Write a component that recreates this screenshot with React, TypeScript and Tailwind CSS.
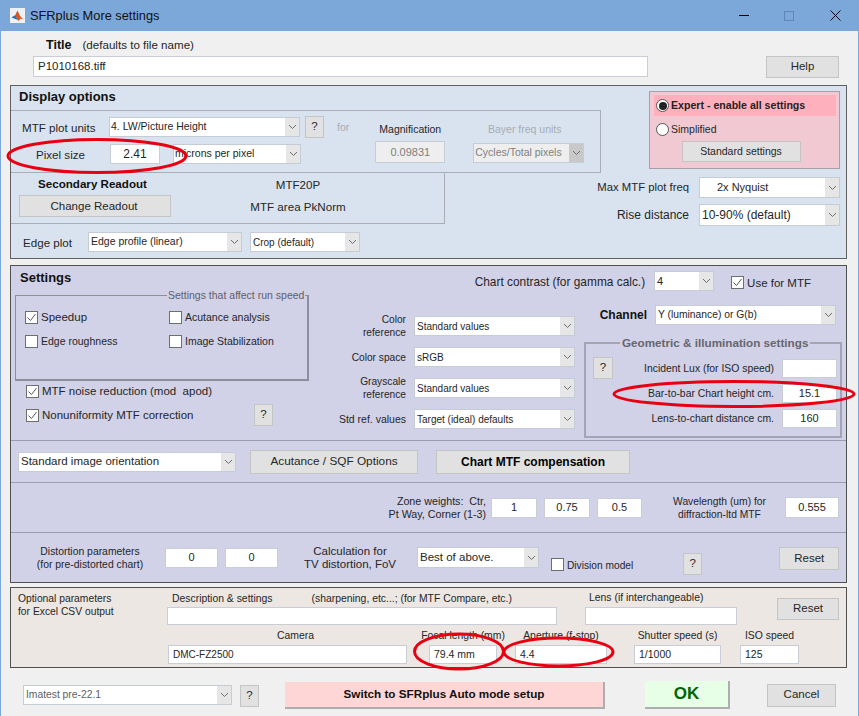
// SFRplus More settings dialog
import React from "react";

const ink = "leading-[13px] text-[#262626] whitespace-nowrap";

function Select({ className = "", text, muted = false, fs = "text-[10.5px]", pad = "pl-[2px]", tone = "text-[#262626]" }: { className?: string; text: string; muted?: boolean; fs?: string; pad?: string; tone?: string }) {
  return (
    <div className={`flex shrink-0 items-stretch border border-[#c6ccd6] ${muted ? "bg-[#eeeeee]" : "bg-white"} ${className}`}>
      <div className={`flex-1 overflow-hidden flex items-center whitespace-nowrap ${fs} ${pad} ${muted ? "text-[#808080]" : tone}`}>{text}</div>
      <div className={`w-[14px] flex items-center justify-center ${muted ? "bg-[#c8c8c8]" : "bg-[#e6e6e6]"}`}>
        <svg width="9" height="6" viewBox="0 0 9 6" fill="none" stroke="#6e6e6e" strokeWidth="1"><path d="M1 1l3.5 3.5L8 1" /></svg>
      </div>
    </div>
  );
}

function Input({ className = "", text = "", center = false, muted = false, fs = "text-[11px]" }: { className?: string; text?: string; center?: boolean; muted?: boolean; fs?: string }) {
  return (
    <div className={`flex shrink-0 items-center border border-[#c9cdd6] whitespace-nowrap ${fs} ${center ? "justify-center" : "pl-[4px]"} ${muted ? "bg-[#eeeeee] text-[#808080]" : "bg-white text-[#262626]"} ${className}`}>{text}</div>
  );
}

function Btn({ className = "", text, bold = false, fs = "text-[11.5px]" }: { className?: string; text: string; bold?: boolean; fs?: string }) {
  return (
    <div className={`flex shrink-0 items-center justify-center border border-[#c4c4c4] bg-[#e1e1e1] whitespace-nowrap ${fs} ${bold ? "font-bold text-black" : "text-[#262626]"} ${className}`}>{text}</div>
  );
}

function Help({ className = "" }: { className?: string }) {
  return <Btn text="?" className={`w-[19px] h-[22px] ${className}`} />;
}

function Check({ label, on = false, className = "", fs = "text-[11.5px]" }: { label: string; on?: boolean; className?: string; fs?: string }) {
  return (
    <div className={`flex items-center shrink-0 ${className}`}>
      <div className="w-[13px] h-[13px] shrink-0 border border-[#6e6e6e] bg-white flex items-center justify-center">
        {on && (
          <svg width="11" height="11" viewBox="0 0 11 11" fill="none" stroke="#5a5a5a" strokeWidth="1"><path d="M1.5 5.5l3 3 5-6.5" /></svg>
        )}
      </div>
      <span className={`${ink} ${fs} whitespace-pre ml-[3px] mt-[1px]`}>{label}</span>
    </div>
  );
}

function Radio({ on = false }: { on?: boolean }) {
  return (
    <div className="w-[13px] h-[13px] shrink-0 rounded-full border border-[#555555] bg-white flex items-center justify-center">
      {on && <div className="w-[8px] h-[8px] rounded-full bg-[#222222]" />}
    </div>
  );
}

function SettingRow({ label, value, className = "", fs = "text-[10.5px]" }: { label: React.ReactNode; value: string; className?: string; fs?: string }) {
  return (
    <div className={`flex items-center h-[20px] ${className}`}>
      <div className={`${ink} ${fs} w-[94px] text-right`}>{label}</div>
      <Select className="w-[161px] h-[20px] ml-[8px]" text={value} fs="text-[10px]" pad="pl-[2px]" />
    </div>
  );
}

function GeoRow({ label, value, fs = "text-[10.4px]" }: { label: string; value?: string; fs?: string }) {
  return (
    <div className="flex items-center justify-end">
      <span className={`${ink} ${fs}`}>{label}</span>
      <Input className="w-[55px] h-[19px] ml-[8px]" text={value} center />
    </div>
  );
}

function Labelled({ label, value, className = "", pad = "", fs = "text-[10.4px]", ifs = "text-[10.5px]" }: { label: string; value?: string; className?: string; pad?: string; fs?: string; ifs?: string }) {
  return (
    <div className={`flex flex-col shrink-0 ${className}`}>
      <div className={`${ink} ${fs} ${pad} flex justify-center h-[14px] mb-[2px]`}>{label}</div>
      <Input className="w-full h-[19px]" text={value} fs={ifs} />
    </div>
  );
}

function Overlay() {
  return (
    <svg className="absolute left-0 top-0" width="859" height="716" fill="none" stroke="#e80012" strokeWidth="3">
      <ellipse cx="96" cy="156" rx="89" ry="16.5" />
      <ellipse cx="733" cy="394" rx="120" ry="12.5" />
      <ellipse cx="458" cy="651.5" rx="44.5" ry="17.5" />
      <ellipse cx="557.5" cy="652" rx="54.5" ry="14" />
    </svg>
  );
}

export default function App() {
  return (
    <div className="relative w-[859px] h-[716px] overflow-hidden bg-[#f0f0f0] font-['Liberation_Sans',Arial,sans-serif] border-x border-[#7ca8d9]">
      {/* title bar */}
      <div className="h-[31px] -mx-px bg-[#7ca8d9] flex items-center">
        <svg className="ml-[10px]" width="15" height="15" viewBox="0 0 15 15">
          <rect width="15" height="15" fill="#eef1f4" />
          <path d="M1.5 9.5L5 7.5l2.5-5L10 8l3.5 3.5-3-1-2 2.5L6 9z" fill="#d9531e" />
          <path d="M1.5 9.5L5 7.5l1.5 2 1.5 2.5z" fill="#2a6fb0" />
        </svg>
        <span className="ml-[5px] text-[12.8px] text-[#111111]">SFRplus More settings</span>
        <div className="ml-auto flex items-center">
          <div className="w-[10px] h-px bg-black" />
          <div className="w-[10px] h-[10px] border border-[#5f87b5] ml-[35px]" />
          <svg className="ml-[36px] mr-[18px]" width="11" height="11" viewBox="0 0 11 11" stroke="#000" strokeWidth="1"><path d="M.5.5l10 10M10.5.5l-10 10" /></svg>
        </div>
      </div>

      {/* title */}
      <div className="flex items-baseline mt-[7px] h-[14px] pl-[45px]">
        <span className="text-[12.5px] font-bold text-[#111111] leading-[14px]">Title</span>
        <span className={`${ink} text-[11.6px] ml-[11px]`}>(defaults to file name)</span>
      </div>
      <div className="flex mt-[4px] pl-[32px]">
        <Input className="w-[615px] h-[21px]" text="P1010168.tiff" fs="text-[11.5px] pl-[1px]" />
        <Btn className="w-[73px] h-[22px] ml-[118px]" text="Help" />
      </div>

      {/* display options */}
      <div className="flex ml-[9px] mt-[7px] w-[837px] h-[174px] border border-[#606060] bg-[#d9e3ef]">
        <div className="w-[590px] shrink-0">
          <div className="h-[24px] pl-[8px] pt-[4px] text-[13px] leading-[14px] font-bold text-[#111111]">Display options</div>
          <div className="flex h-[63px] border-y border-r border-[#a9aeb6]">
            <div className="w-[313px] shrink-0">
              <div className="flex items-center mt-[5px] h-[22px]">
                <span className={`${ink} text-[11.6px] ml-[11px] w-[88px] mt-[1px]`}>MTF plot units</span>
                <Select className="w-[191px] h-[20px]" text="4. LW/Picture Height" pad="pl-[1px]" />
                <Help className="ml-[5px]" />
              </div>
              <div className="flex items-center mt-[6px] h-[20px]">
                <span className={`${ink} text-[11.6px] ml-[25px] w-[74px] mt-[1px]`}>Pixel size</span>
                <Input className="w-[50px] h-[20px]" text="2.41" center fs="text-[12px]" />
                <Select className="w-[128px] h-[20px] ml-[13px]" text="microns per pixel" pad="pl-[1px]" />
              </div>
            </div>
            <div className="text-[10.5px] leading-[13px] text-[#a6acb5] ml-[13px] mt-[10px]">for</div>
            <div className="w-[70px] ml-[26px] flex flex-col items-center">
              <div className={`${ink} text-[10.5px] mt-[12px]`}>Magnification</div>
              <Input className="w-[70px] h-[22px] mt-[5px]" text="0.09831" center muted />
            </div>
            <div className="w-[111px] ml-[28px] flex flex-col items-center">
              <div className="text-[10.5px] leading-[13px] whitespace-nowrap text-[#a6acb5] mt-[12px] pr-[8px]">Bayer freq units</div>
              <Select className="w-[111px] h-[20px] mt-[7px]" text="Cycles/Total pixels" muted pad="pl-[1px]" />
            </div>
          </div>
          <div className="flex w-[434px] h-[51px] border-b border-r border-[#a9aeb6]">
            <div className="w-[160px] pl-[8px] shrink-0">
              <div className="text-[11.6px] leading-[13px] font-bold text-[#111111] text-center mt-[4px] pr-[5px]">Secondary Readout</div>
              <Btn className="w-[152px] h-[22px] mt-[5px] pt-[1px] pr-[2px]" text="Change Readout" />
            </div>
            <div className={`${ink} text-[11.6px] w-[254px] text-center`}>
              <div className="mt-[5px]">MTF20P</div>
              <div className="mt-[9px]">MTF area PkNorm</div>
            </div>
          </div>
          <div className="flex items-center mt-[8px]">
            <span className={`${ink} text-[11.6px] ml-[12px] w-[65px]`}>Edge plot</span>
            <Select className="w-[154px] h-[20px]" text="Edge profile (linear)" />
            <Select className="w-[110px] h-[20px] ml-[8px]" text="Crop (default)" fs="text-[10px]" />
          </div>
        </div>
        <div className="ml-[48px] mt-[5px] w-[191px]">
          <div className="h-[78px] border border-[#a8a0a8] bg-[#f0c9d3] pl-[4px] pr-[3px] pt-[3px]">
            <div className="h-[21px] bg-[#ffb0bc] flex items-center pl-[2px]">
              <Radio on />
              <span className="text-[10.6px] leading-[13px] font-bold text-[#222222] whitespace-nowrap ml-[2px]">Expert - enable all settings</span>
            </div>
            <div className="flex items-center pl-[2px] mt-[3px] h-[20px]">
              <Radio />
              <span className={`${ink} text-[10.5px] ml-[2px]`}>Simplified</span>
            </div>
            <div className="flex justify-center pr-[8px] mt-[2px]">
              <Btn className="w-[119px] h-[21px]" text="Standard settings" fs="text-[10.5px]" />
            </div>
          </div>
          <div className="flex items-center justify-end mt-[8px]">
            <span className={`${ink} text-[11.3px]`}>Max MTF plot freq</span>
            <Select className="w-[141px] h-[21px] ml-[10px]" text="2x Nyquist" fs="text-[11px]" pad="pl-[17px]" />
          </div>
          <div className="flex items-center justify-end mt-[6px]">
            <span className={`${ink} text-[12px]`}>Rise distance</span>
            <Select className="w-[141px] h-[22px] ml-[10px]" text="10-90% (default)" fs="text-[12px]" />
          </div>
        </div>
      </div>

      {/* settings */}
      <div className="ml-[9px] mt-[6px] w-[837px] h-[318px] border border-[#505050] bg-[#d1d1e8]">
        <div className="h-[175px] border-b border-[#9c9cb2]">
          <div className="flex h-[29px]">
            <div className="ml-[9px] mt-[5px] text-[13px] leading-[14px] font-bold text-[#111111]">Settings</div>
            <div className="flex items-center ml-auto h-[20px] mt-[5px] pr-[35px]">
              <span className={`${ink} text-[11.9px] mt-[3px]`}>Chart contrast (for gamma calc.)</span>
              <Select className="w-[60px] h-[20px] ml-[9px]" text="4" fs="text-[11px]" />
              <Check className="ml-[17px] mt-[3px]" label="Use for MTF" on />
            </div>
          </div>
          <div className="flex">
            <div className="w-[301px] shrink-0">
              <div className="relative ml-[4px] w-[294px] h-[86px] border border-r-2 border-b-2 border-[#8e8e9c] pt-[14px] pl-[9px]">
                <div className="absolute left-[151px] -top-[7px] bg-[#d1d1e8] px-[1px] text-[10.5px] leading-[13px] whitespace-nowrap text-[#606068]">Settings that affect run speed</div>
                <div className="grid grid-cols-[144px_1fr] gap-y-[10px]">
                  <Check label="Speedup" on />
                  <Check label="Acutance analysis" fs="text-[10.5px]" />
                  <Check label="Edge roughness" fs="text-[10.5px]" />
                  <Check label="Image Stabilization" fs="text-[10.5px]" />
                </div>
              </div>
              <Check className="ml-[15px] mt-[3px]" label="MTF noise reduction (mod  apod)" on />
              <div className="flex items-center mt-[6px]">
                <Check className="ml-[15px]" label="Nonuniformity MTF correction" on />
                <Help className="ml-auto mr-[39px]" />
              </div>
            </div>
            <div className="shrink-0 pt-[21px] flex flex-col gap-[11px]">
              <SettingRow label={<>Color<br />reference</>} value="Standard values" fs="text-[10.2px]" />
              <SettingRow label="Color space" value="sRGB" fs="text-[10.2px]" />
              <SettingRow label={<>Grayscale<br />reference</>} value="Standard values" fs="text-[10.2px]" />
              <SettingRow label="Std ref. values" value="Target (ideal) defaults" />
            </div>
            <div className="ml-[9px] w-[258px] shrink-0 pt-[10px]">
              <div className="flex items-center justify-end pr-[6px]">
                <span className="text-[12px] leading-[14px] font-bold text-[#111111]">Channel</span>
                <Select className="w-[181px] h-[20px] ml-[8px]" text="Y (luminance) or G(b)" fs="text-[10.3px]" />
              </div>
              <div className="relative mt-[17px] h-[96px] border-2 border-[#a4a4b4] flex">
                <div className="absolute left-[34px] -top-[8px] bg-[#d1d1e8] px-[2px] text-[11.7px] leading-[14px] font-bold whitespace-nowrap text-[#66666e]">Geometric &amp; illumination settings</div>
                <Help className="ml-[7px] mt-[13px] w-[20px]" />
                <div className="flex-1 pr-[3px] pt-[15px] flex flex-col gap-[6px]">
                  <GeoRow label="Incident Lux (for ISO speed)" />
                  <GeoRow label="Bar-to-bar Chart height cm." value="15.1" />
                  <GeoRow label="Lens-to-chart distance cm." value="160" />
                </div>
              </div>
            </div>
          </div>
        </div>

        <div className="h-[42px] border-b border-[#9c9cb2] flex items-center">
          <Select className="w-[218px] h-[20px] ml-[7px]" text="Standard image orientation" fs="text-[11.5px]" />
          <Btn className="w-[168px] h-[24px] ml-[14px]" text="Acutance / SQF Options" fs="text-[11.8px]" />
          <Btn className="w-[194px] h-[24px] ml-[18px]" text="Chart MTF compensation" bold fs="text-[12px]" />
        </div>

        <div className="h-[50px] border-b border-[#9c9cb2] flex items-center">
          <div className={`${ink} text-[10.7px] w-[475px] text-right whitespace-pre`}>{"Zone weights:  Ctr,\nPt Way, Corner (1-3)"}</div>
          <Input className="w-[46px] h-[20px] ml-[5px]" text="1" center />
          <Input className="w-[46px] h-[20px] ml-[7px]" text="0.75" center />
          <Input className="w-[45px] h-[20px] ml-[7px]" text="0.5" center />
          <div className={`${ink} text-[10.3px] w-[93px] ml-[31px] text-center`}>Wavelength (um) for<br />diffraction-ltd MTF</div>
          <Input className="w-[54px] h-[21px] ml-[19px]" text="0.555" center />
        </div>

        <div className="h-[49px] flex items-center">
          <div className={`${ink} text-[10.4px] w-[158px] shrink-0 text-center`}>Distortion parameters<br />(for pre-distorted chart)</div>
          <Input className="w-[53px] h-[20px] ml-[-4px]" text="0" center />
          <Input className="w-[53px] h-[20px] ml-[7px]" text="0" center />
          <div className={`${ink} text-[11.5px] w-[92px] shrink-0 ml-[26px] text-center`}>Calculation for<br />TV distortion, FoV</div>
          <Select className="w-[122px] h-[21px] ml-[21px]" text="Best of above." fs="text-[11.5px]" />
          <Check className="ml-[12px] mt-[14px]" label="Division model" fs="text-[10.2px]" />
          <Help className="ml-[50px] mt-[13px]" />
          <Btn className="w-[60px] h-[23px] ml-[77px] mt-[2px]" text="Reset" />
        </div>
      </div>

      {/* optional parameters */}
      <div className="ml-[9px] mt-[4px] w-[837px] h-[81px] border border-[#505050] bg-[#ece7e3]">
        <div className="flex h-[37px]">
          <div className={`${ink} text-[10.3px] w-[156px] pl-[7px] pt-[4px] shrink-0`}>Optional parameters<br />for Excel CSV output</div>
          <div className="w-[390px] shrink-0">
            <div className={`${ink} text-[10.4px] flex h-[19px] pt-[4px] pl-[5px]`}>
              <span>Description &amp; settings</span>
              <span className="ml-[39px]">(sharpening, etc...; (for MTF Compare, etc.)</span>
            </div>
            <Input className="w-[390px] h-[18px]" />
          </div>
          <div className="w-[152px] ml-[28px] shrink-0">
            <div className={`${ink} text-[10.4px] h-[19px] pt-[3px] pl-[4px]`}>Lens (if interchangeable)</div>
            <Input className="w-[152px] h-[18px]" />
          </div>
          <Btn className="w-[62px] h-[22px] ml-[40px] mt-[10px]" text="Reset" />
        </div>
        <div className="flex pl-[157px] mt-[4px]">
          <Labelled className="w-[239px]" pad="pl-[16px]" label="Camera" value="DMC-FZ2500" ifs="text-[10px]" />
          <Labelled className="w-[68px] ml-[22px]" label="Focal length (mm)" value="79.4 mm" />
          <Labelled className="w-[92px] ml-[18px]" label="Aperture (f-stop)" value="4.4" />
          <Labelled className="w-[87px] ml-[27px]" label="Shutter speed (s)" value="1/1000" />
          <Labelled className="w-[59px] ml-[19px]" label="ISO speed" value="125" />
        </div>
      </div>

      {/* bottom buttons */}
      <div className="flex items-center h-[36px] mt-[9px]">
        <Select className="w-[209px] h-[20px] ml-[22px]" text="Imatest pre-22.1" fs="text-[10.3px]" tone="text-[#606060]" />
        <Help className="ml-[8px] mt-[1px]" />
        <div className="w-[320px] h-[27px] ml-[26px] flex items-center justify-center bg-[#ffd6d6] border-b-2 border-r-2 border-[#aeaeae] text-[11.7px] font-bold text-[#111111]">Switch to SFRplus Auto mode setup</div>
        <div className="w-[85px] h-[28px] ml-[40px] -mt-[1px] flex items-center justify-center bg-[#e6ffe6] border-b-2 border-r-2 border-[#aeaeae] text-[17px] font-bold text-[#006400]">OK</div>
        <Btn className="w-[69px] h-[23px] ml-[37px]" text="Cancel" />
      </div>

      <Overlay />
    </div>
  );
}
